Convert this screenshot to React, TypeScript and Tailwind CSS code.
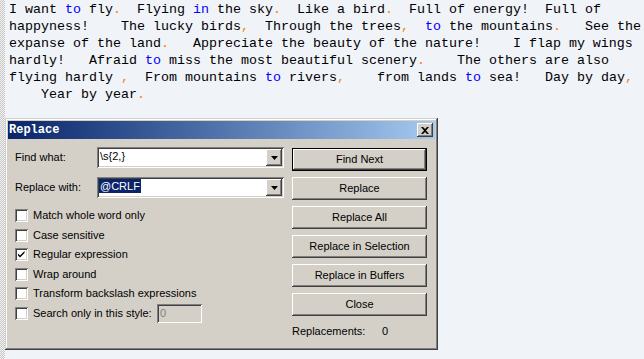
import React from "react";

const lines = [
  "I want to fly.  Flying in the sky.  Like a bird.  Full of energy!  Full of",
  "happyness!    The lucky birds,  Through the trees,  to the mountains.   See the",
  "expanse of the land.   Appreciate the beauty of the nature!    I flap my wings",
  "hardly!   Afraid to miss the most beautiful scenery.    The others are also",
  "flying hardly ,  From mountains to rivers,    from lands to sea!   Day by day,",
  "    Year by year.",
];

function Line({ text }: { text: string }) {
  const parts = text.split(/(\bto\b|\bin\b|[.,])/);
  return (
    <div className="h-[17px]">
      {parts.map((p, i) => {
        if (p === "." || p === ",")
          return (
            <span key={i} className="text-[#ff8000]">
              {p}
            </span>
          );
        if (p === "to" || p === "in")
          return (
            <span key={i} className="text-[#0000ff]">
              {p}
            </span>
          );
        return <span key={i}>{p}</span>;
      })}
    </div>
  );
}

const raised =
  "shadow-[inset_-1px_-1px_0_#404040,inset_1px_1px_0_#ffffff,inset_-2px_-2px_0_#808080,inset_2px_2px_0_#d4d0c8]";
const sunken =
  "shadow-[inset_1px_1px_0_#808080,inset_-1px_-1px_0_#ffffff,inset_2px_2px_0_#404040,inset_-2px_-2px_0_#d4d0c8]";

function Combo({ text, selected }: { text: string; selected?: boolean }) {
  return (
    <div className={`w-[187px] h-[21px] bg-white p-[2px] flex ${sunken}`}>
      <div className="flex-1 flex items-start pl-[0px]">
        <span
          className={`h-[14px] leading-[14px] px-[1px] ${
            selected ? "bg-[#0a246a] text-white" : "text-black"
          }`}
        >
          {text}
        </span>
      </div>
      <div className={`w-[16px] h-[17px] bg-[#d4d0c8] flex items-center justify-center ${raised}`}>
        <svg width="7" height="4" viewBox="0 0 7 4">
          <path d="M0 0H7L3.5 4Z" fill="#000" />
        </svg>
      </div>
    </div>
  );
}

function Check({ label, checked, extra }: { label: string; checked?: boolean; extra?: React.ReactNode }) {
  return (
    <div className="h-[19.5px] flex items-center">
      <div className={`w-[13px] h-[13px] bg-white p-[2px] ${sunken}`}>
        {checked && (
          <svg width="9" height="9" viewBox="0 0 9 9">
            <path d="M1 3.5L3 5.5L7.5 1V3L3 7.5L1 5.5Z" fill="#000" />
          </svg>
        )}
      </div>
      <span className={`ml-[5px] ${extra ? "w-[124px]" : ""}`}>{label}</span>
      {extra}
    </div>
  );
}

function Btn({ label, def }: { label: string; def?: boolean }) {
  if (def) {
    return (
      <div className="h-[23px] border border-black">
        <div className={`h-full flex items-center justify-center bg-[#d4d0c8] ${raised}`}>{label}</div>
      </div>
    );
  }
  return <div className={`h-[23px] flex items-center justify-center bg-[#d4d0c8] ${raised}`}>{label}</div>;
}

function Dialog() {
  return (
    <div
      className="mt-[15px] w-[433px] h-[232px] shrink-0 bg-[#d4d0c8] p-[3px] flex flex-col font-['Liberation_Sans',sans-serif] text-[11px] text-black shadow-[inset_-1px_-1px_0_#404040,inset_1px_1px_0_#d4d0c8,inset_-2px_-2px_0_#808080,inset_2px_2px_0_#ffffff]"
    >
      <div className="h-[18px] flex items-center justify-between bg-linear-to-r from-[#0a246a] to-[#a6caf0] pl-[1px] pr-[2px]">
        <span className="font-['Liberation_Mono',monospace] font-bold text-[12px] text-white leading-none">
          Replace
        </span>
        <div className={`w-[16px] h-[14px] bg-[#d4d0c8] flex items-center justify-center ${raised}`}>
          <svg width="8" height="7" viewBox="0 0 8 7">
            <path d="M0 0H2L4 2L6 0H8L5 3.5L8 7H6L4 5L2 7H0L3 3.5Z" fill="#000" />
          </svg>
        </div>
      </div>
      <div className="flex pt-[8px] pl-[7px] gap-[8px]">
        <div className="w-[269px] flex flex-col">
          <div className="h-[21px] flex items-center">
            <span className="w-[82px]">Find what:</span>
            <Combo text={"\\s{2,}"} />
          </div>
          <div className="h-[21px] mt-[9px] flex items-center">
            <span className="w-[82px]">Replace with:</span>
            <Combo text="@CRLF" selected />
          </div>
          <div className="mt-[7.75px] flex flex-col">
            <Check label="Match whole word only" />
            <Check label="Case sensitive" />
            <Check label="Regular expression" checked />
            <Check label="Wrap around" />
            <Check label="Transform backslash expressions" />
            <Check
              label="Search only in this style:"
              extra={
                <div className={`w-[45px] h-[19px] bg-[#d4d0c8] p-[2px] flex items-center ${sunken}`}>
                  <span className="pl-[1px] text-[#808080]">0</span>
                </div>
              }
            />
          </div>
        </div>
        <div className="w-[135px] flex flex-col pt-[1px] gap-[6px]">
          <Btn label="Find Next" def />
          <Btn label="Replace" />
          <Btn label="Replace All" />
          <Btn label="Replace in Selection" />
          <Btn label="Replace in Buffers" />
          <Btn label="Close" />
          <div className="mt-[2px] h-[15px] leading-[15px] flex">
            <span className="w-[90px]">Replacements:</span>
            <span>0</span>
          </div>
        </div>
      </div>
    </div>
  );
}

export default function App() {
  return (
    <div className="w-[644px] h-[359px] overflow-hidden flex bg-[#f0f3f8]">
      <div className="w-[5px] h-full shrink-0 bg-[conic-gradient(#c4c4c4_25%,#f6f6f6_0_50%,#c4c4c4_0_75%,#f6f6f6_0)] bg-[length:2px_2px]" />
      <div className="flex-1 flex flex-col min-w-0">
        <div className="pl-[4px] pt-[1px] font-['Liberation_Mono',monospace] text-[13.33px] leading-[17px] text-black whitespace-pre">
          {lines.map((l, i) => (
            <Line key={i} text={l} />
          ))}
        </div>
        <Dialog />
      </div>
    </div>
  );
}
